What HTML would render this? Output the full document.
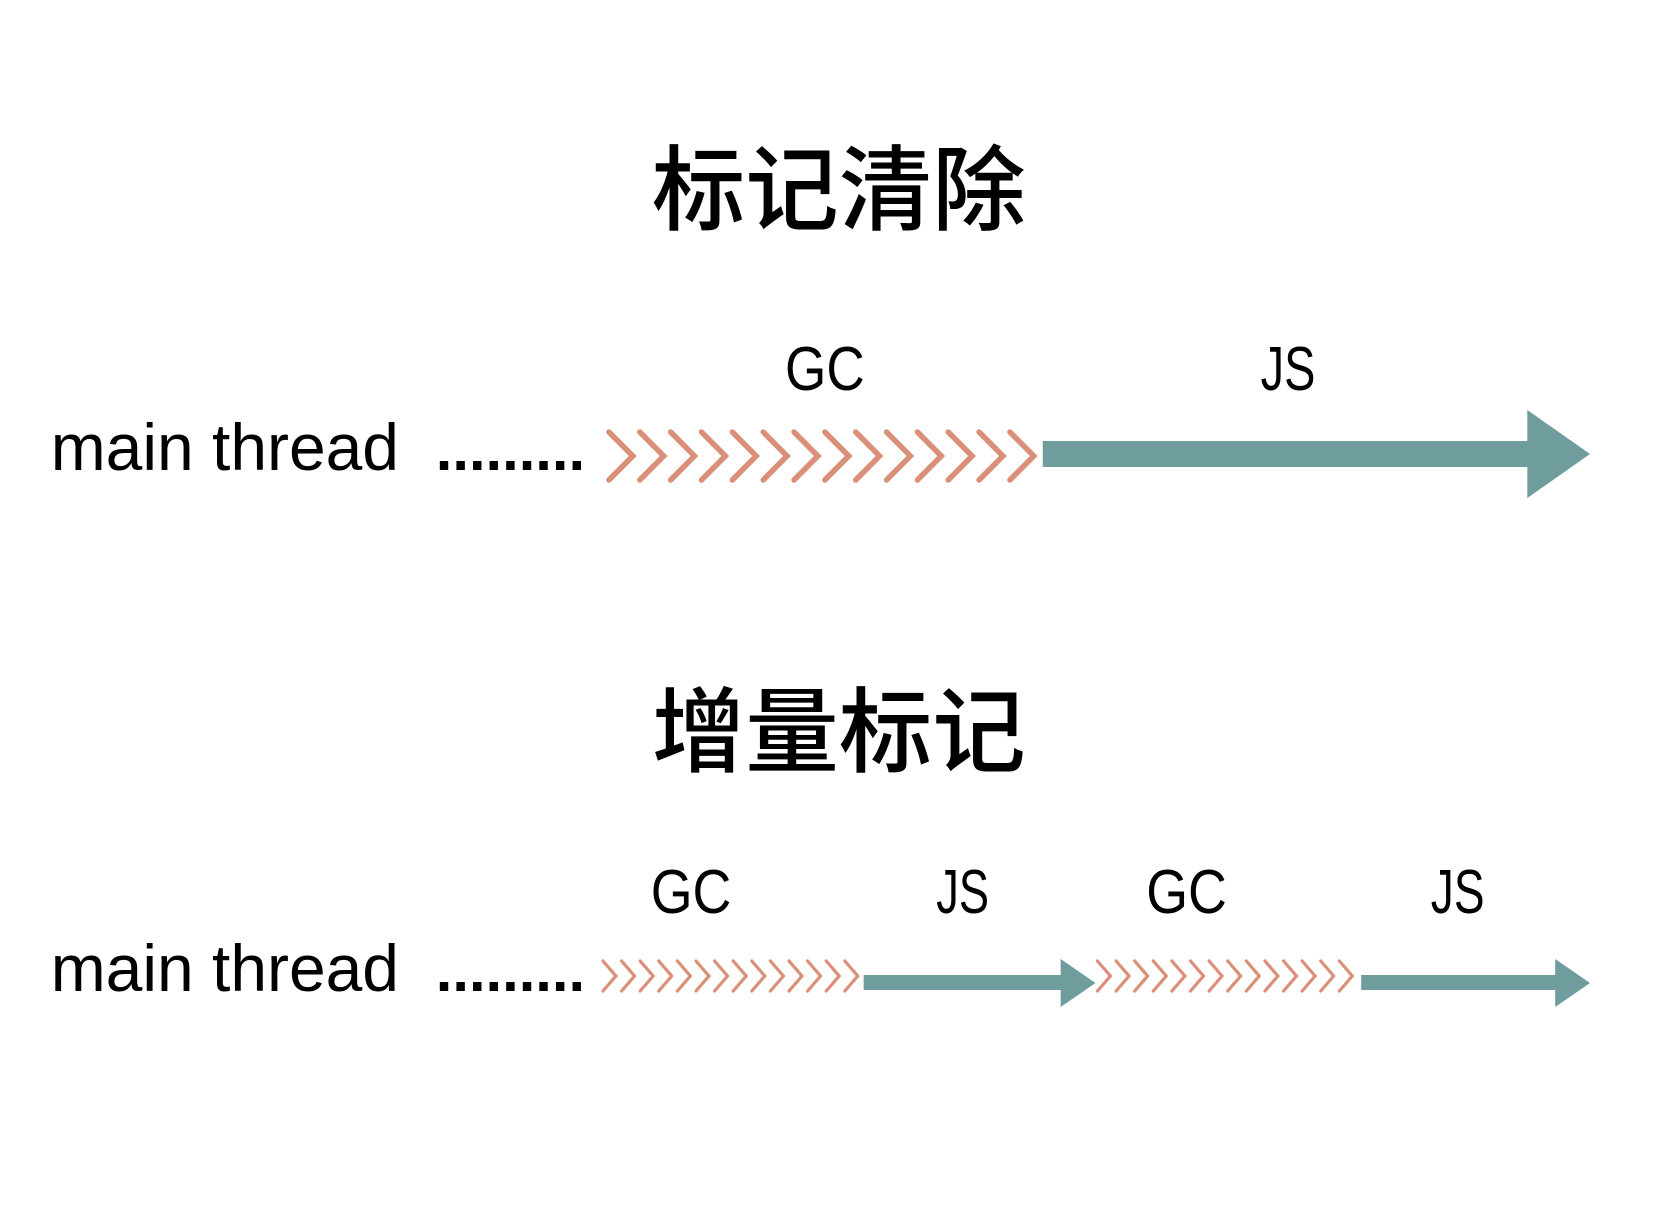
<!DOCTYPE html>
<html><head><meta charset="utf-8">
<style>
html,body{margin:0;padding:0;background:#fff;}
svg{display:block;}
text{font-family:"Liberation Sans","Noto Sans CJK SC",sans-serif;fill:#000;}
</style></head>
<body>
<svg width="1668" height="1212" viewBox="0 0 1668 1212" xmlns="http://www.w3.org/2000/svg">
<defs>
<g id="cb"><polyline points="0,0 24,24 0,48" fill="none" stroke="#d98f78" stroke-width="5.5" stroke-linecap="round" stroke-linejoin="miter"/></g>
<g id="cs"><polyline points="0,0 13,15 0,30" fill="none" stroke="#d98f78" stroke-width="3.2" stroke-linecap="round"/></g>
</defs>
<g transform="scale(0.995,1)">
<!-- Section 1 -->
<text x="655" y="223" font-size="93" font-weight="500" textLength="376" lengthAdjust="spacingAndGlyphs" style="font-family:'Noto Sans CJK SC',sans-serif">标记清除</text>
<text x="789" y="390" font-size="62" textLength="80" lengthAdjust="spacingAndGlyphs">GC</text>
<text x="1267" y="390" font-size="62" textLength="55" lengthAdjust="spacingAndGlyphs">JS</text>
<text x="51" y="470" font-size="66" textLength="350" lengthAdjust="spacingAndGlyphs">main thread</text>
<text x="438" y="470" font-size="60" font-weight="bold" textLength="150" lengthAdjust="spacingAndGlyphs">.........</text>
<g transform="translate(612,432)">
<use href="#cb" x="0"/><use href="#cb" x="31"/><use href="#cb" x="62"/><use href="#cb" x="93"/><use href="#cb" x="124"/><use href="#cb" x="155"/><use href="#cb" x="186"/><use href="#cb" x="217"/><use href="#cb" x="248"/><use href="#cb" x="279"/><use href="#cb" x="310"/><use href="#cb" x="341"/><use href="#cb" x="372"/><use href="#cb" x="403"/>
</g>
<rect x="1048" y="441" width="490" height="26" fill="#6f9c9d"/>
<polygon points="1535,410 1598,454 1535,498" fill="#6f9c9d"/>

<!-- Section 2 -->
<text x="655" y="765" font-size="93" font-weight="500" textLength="376" lengthAdjust="spacingAndGlyphs" style="font-family:'Noto Sans CJK SC',sans-serif">增量标记</text>
<text x="654" y="913" font-size="62" textLength="81" lengthAdjust="spacingAndGlyphs">GC</text>
<text x="941" y="913" font-size="62" textLength="53" lengthAdjust="spacingAndGlyphs">JS</text>
<text x="1152" y="913" font-size="62" textLength="81" lengthAdjust="spacingAndGlyphs">GC</text>
<text x="1438" y="913" font-size="62" textLength="54" lengthAdjust="spacingAndGlyphs">JS</text>
<text x="51" y="991" font-size="66" textLength="350" lengthAdjust="spacingAndGlyphs">main thread</text>
<text x="438" y="991" font-size="60" font-weight="bold" textLength="150" lengthAdjust="spacingAndGlyphs">.........</text>
<g transform="translate(606,961)">
<use href="#cs" x="0"/><use href="#cs" x="18.7"/><use href="#cs" x="37.4"/><use href="#cs" x="56.1"/><use href="#cs" x="74.8"/><use href="#cs" x="93.5"/><use href="#cs" x="112.2"/><use href="#cs" x="130.9"/><use href="#cs" x="149.6"/><use href="#cs" x="168.3"/><use href="#cs" x="187"/><use href="#cs" x="205.7"/><use href="#cs" x="224.4"/><use href="#cs" x="243.1"/>
</g>
<rect x="868" y="975" width="200" height="15" fill="#6f9c9d"/>
<polygon points="1066,959 1101,983 1066,1007" fill="#6f9c9d"/>
<g transform="translate(1103,961)">
<use href="#cs" x="0"/><use href="#cs" x="18.7"/><use href="#cs" x="37.4"/><use href="#cs" x="56.1"/><use href="#cs" x="74.8"/><use href="#cs" x="93.5"/><use href="#cs" x="112.2"/><use href="#cs" x="130.9"/><use href="#cs" x="149.6"/><use href="#cs" x="168.3"/><use href="#cs" x="187"/><use href="#cs" x="205.7"/><use href="#cs" x="224.4"/><use href="#cs" x="243.1"/>
</g>
<rect x="1368" y="975" width="197" height="15" fill="#6f9c9d"/>
<polygon points="1563,959 1598,983 1563,1007" fill="#6f9c9d"/>
</g>
</svg>
</body></html>
